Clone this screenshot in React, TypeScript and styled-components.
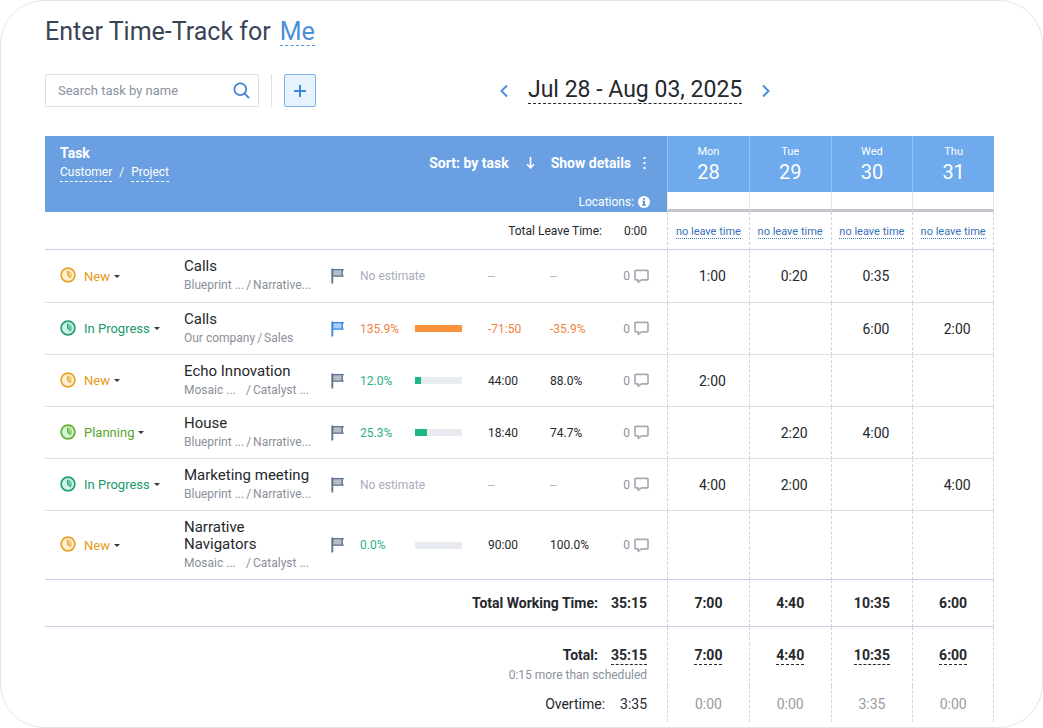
import React from "react";
import styled, { createGlobalStyle } from "styled-components";

const GlobalStyle = createGlobalStyle`
  *, *::before, *::after { box-sizing: border-box; }
  body {
    margin: 0;
    background: #fff;
    color: #25282c;
    font-family: Roboto, "Liberation Sans", sans-serif;
    font-size: 14px;
  }
  button, input { font: inherit; }
`;

const Card = styled.main`
  min-height: 100vh;
  padding: 17px 48px 4px 44px;
  border: 1px solid #e4e5e7;
  border-radius: 44px;
`;

const PlainButton = styled.button`
  padding: 0;
  border: 0;
  background: none;
  color: inherit;
  cursor: pointer;
`;

const Title = styled.h1`
  display: flex;
  gap: 9px;
  margin: 0;
  color: #3b4457;
  font-size: 25px;
  font-weight: 400;
  line-height: 27px;
`;

const UserLink = styled.a`
  border-bottom: 1px dashed #4a8fd9;
  color: #4a8fd9;
  text-decoration: none;
`;

const Toolbar = styled.div`
  display: flex;
  align-items: center;
  height: 33px;
  margin: 28px 0 29px;
`;

const SearchBox = styled.label`
  display: flex;
  align-items: center;
  width: 214px;
  height: 33px;
  padding: 0 8px 0 12px;
  border: 1px solid #dcdee4;
  border-radius: 2px;
  color: #4583cb;
`;

const SearchInput = styled.input`
  flex: 1;
  min-width: 0;
  padding: 0;
  border: 0;
  outline: 0;
  background: none;
  font-size: 13px;
  &::placeholder { color: #8b909f; opacity: 1; }
`;

const Divider = styled.span`
  width: 1px;
  height: 33px;
  margin: 0 12px;
  background: #dfe1e6;
`;

const AddButton = styled(PlainButton)`
  display: grid;
  place-items: center;
  width: 32px;
  height: 33px;
  border: 1px solid #7fb0ea;
  border-radius: 2px;
  background: #e6f2fe;
  color: #3f86d6;
`;

const WeekNav = styled.nav`
  display: flex;
  align-items: center;
  gap: 18px;
  margin-left: 182px;
  color: #4a90e2;
  svg { display: block; }
`;

const WeekRange = styled(PlainButton)`
  border-bottom: 1px dashed #25282c;
  color: #25282c;
  font-size: 23px;
  line-height: 26px;
`;

const Sheet = styled.table`
  width: 100%;
  table-layout: fixed;
  border-collapse: separate;
  border-spacing: 0;
  th, td { padding: 0; text-align: left; }
`;

const TaskHead = styled.th`
  height: 76px;
  background: #6a9fe1;
  color: #fff;
  font-weight: 400;
  vertical-align: top;
`;

const HeadBar = styled.div`
  display: flex;
  justify-content: space-between;
  height: 76px;
  padding: 8px 17px 2px 15px;
`;

const HeadLabel = styled.div`
  font-size: 14px;
  font-weight: 700;
  line-height: 18px;
`;

const HeadLinks = styled.div`
  display: flex;
  gap: 7px;
  margin-top: 2px;
  font-size: 12px;
  line-height: 17px;
  a {
    border-bottom: 1px dashed #fff;
    color: inherit;
    text-decoration: none;
  }
`;

const HeadActions = styled.div`
  display: flex;
  flex-direction: column;
  justify-content: space-between;
  align-items: flex-end;
`;

const SortRow = styled.div`
  display: flex;
  align-items: center;
  height: 38px;
  padding-right: 2px;
  button { font-weight: 700; }
  svg { display: block; }
`;

const SortButton = styled(PlainButton)`
  display: flex;
  align-items: center;
  gap: 17px;
  margin-right: 16px;
`;

const DetailsButton = styled(PlainButton)`
  display: flex;
  align-items: center;
  gap: 10px;
`;

const Locations = styled.div`
  display: flex;
  align-items: center;
  gap: 4px;
  font-size: 12px;
  line-height: 16px;
`;

const DayHead = styled.th`
  height: 56px;
  border-left: 1px solid #8fc0f5;
  background: #6eaaec;
  color: #fff;
  font-weight: 400;
  && { padding-top: 2px; text-align: center; }
`;

const DayName = styled.div`
  font-size: 11px;
  line-height: 14px;
`;

const DayNumber = styled.div`
  font-size: 20px;
  line-height: 26px;
`;

const LocationCell = styled.td`
  height: 20px;
  border-left: 1px solid #e6e7ea;
  border-bottom: 3px solid #c3c6cd;
  &:last-child { border-right: 1px solid #e6e7ea; }
`;

type Line = "strong" | "soft" | "none";
const lineColor = { strong: "#cccce4", soft: "#dfe0e7", none: "transparent" };

const Row = styled.tr<{ $height: number; $line: Line }>`
  height: ${(p) => p.$height}px;
  > * {
    border-bottom: ${(p) => (p.$line === "none" ? "0" : `1px solid ${lineColor[p.$line]}`)};
  }
`;

const DayCell = styled.td<{ $tone?: "bold" | "muted" }>`
  border-left: 1px dashed #d3d3de;
  color: ${(p) => (p.$tone === "muted" ? "#999ba1" : "#25282c")};
  font-weight: ${(p) => (p.$tone === "bold" ? 700 : 400)};
  && { text-align: center; }
  &:last-child { border-right: 1px dashed #d3d3de; }
`;

const HoursCell = styled(DayCell)`
  && { padding-left: 8px; }
`;

const LeaveLink = styled.a`
  border-bottom: 1px dotted #3d7cc0;
  color: #3672b8;
  font-size: 11px;
  line-height: 14px;
  text-decoration: none;
`;

const StatusButton = styled(PlainButton)<{ $color: string }>`
  display: flex;
  align-items: center;
  gap: 8px;
  padding-left: 15px;
  color: ${(p) => p.$color};
  font-size: 13px;
  svg { margin-bottom: 2px; }
`;

const Caret = styled.span`
  margin-left: -4px;
  border: 3px solid transparent;
  border-top-color: #33373c;
  border-bottom: 0;
`;

const TaskName = styled.div`
  font-size: 15px;
  line-height: 17px;
`;

const TaskPath = styled.div`
  display: flex;
  gap: 2px;
  margin-top: 2px;
  color: #8b8f9b;
  font-size: 12px;
  line-height: 17px;
  white-space: nowrap;
`;

const tones = { green: "#2bb07f", orange: "#f0833f", muted: "#a9adb9", dark: "#25282c" };
type Tone = keyof typeof tones;

const Metric = styled.td<{ $tone: Tone }>`
  color: ${(p) => tones[p.$tone]};
  font-size: 12px;
  white-space: nowrap;
`;

const Track = styled.div`
  width: 47px;
  height: 7px;
  background: #e8ebef;
`;

const Fill = styled.div<{ $over?: boolean }>`
  height: 7px;
  background: ${(p) => (p.$over ? "#fb923c" : "#1fb685")};
`;

const CommentButton = styled(PlainButton)`
  display: flex;
  align-items: center;
  gap: 4px;
  margin-left: auto;
  margin-right: 18px;
  color: #8f9299;
  font-size: 12px;
`;

const SumCell = styled.th`
  font-weight: 400;
`;

const SumLine = styled.div<{ $gap: number; $bold?: boolean; $small?: boolean }>`
  display: flex;
  justify-content: flex-end;
  gap: ${(p) => p.$gap}px;
  padding-right: 20px;
  font-size: ${(p) => (p.$small ? 12 : 14)}px;
  font-weight: ${(p) => (p.$bold ? 700 : 400)};
  line-height: 18px;
`;

const SumNote = styled.div`
  margin-top: 2px;
  padding-right: 20px;
  color: #8b90a0;
  font-size: 12px;
  line-height: 16px;
  text-align: right;
`;

const Dashed = styled.span`
  display: inline-block;
  border-bottom: 1px dashed #25282c;
  line-height: 18px;
`;

const TotalDay = styled(DayCell)`
  && { padding-top: 19px; }
  vertical-align: top;
`;

const TotalSum = styled(SumCell)`
  && { padding-top: 19px; }
  vertical-align: top;
`;

const palette = {
  New: { text: "#e79b16", ring: "#e8a32c", fill: "#fdf0d2" },
  "In Progress": { text: "#179a6b", ring: "#239f74", fill: "#cdf3e2" },
  Planning: { text: "#58a51f", ring: "#64ac35", fill: "#d3f5cf" },
};
type Status = keyof typeof palette;

const ClockIcon = ({ status }: { status: Status }) => {
  const { ring, fill } = palette[status];
  return (
    <svg width="16" height="16" viewBox="0 0 16 16" aria-hidden="true">
      <circle cx="8" cy="8" r="6.9" fill={fill} stroke={ring} strokeWidth="1.7" />
      <path d="M7.6 3.6a4.4 4.4 0 0 1 3.300 7.500L7.600 8z" fill={ring} fillOpacity="0.5" />
      <path d="M7.600 3.800V8l3 2.800" fill="none" stroke={ring} strokeWidth="1.1" />
    </svg>
  );
};

const FlagIcon = ({ active }: { active?: boolean }) => {
  const stroke = active ? "#3483e0" : "#5c708a";
  return (
    <Flag width="13" height="16" viewBox="0 0 13 16" aria-hidden="true">
      <path d="M1.500 1.700h10.400l-1 3.200 1 3.300H1.500z" fill={active ? "#a9d0fb" : "#b4bfcc"} stroke={stroke} strokeWidth="1.300" />
      <path d="M1.300 .5v15" stroke={stroke} strokeWidth="1.800" />
    </Flag>
  );
};

const Flag = styled.svg`
  display: block;
`;

const CommentIcon = () => (
  <svg width="15" height="15" viewBox="0 0 15 15" fill="none" stroke="#a9abb0" strokeWidth="1.7" strokeLinejoin="round" aria-hidden="true">
    <path d="M2 1.300h11a1 1 0 0 1 1 1v7.600a1 1 0 0 1-1 1H7.400L4.200 13.300v-2.400H2a1 1 0 0 1-1-1V2.300a1 1 0 0 1 1-1z" />
  </svg>
);

interface Task {
  status: Status;
  name: string;
  customer: string;
  project: string;
  wideGap?: boolean;
  flagged?: boolean;
  used?: string;
  percent?: number;
  left?: string;
  leftPercent?: string;
  tone?: Tone;
  hours: string[];
  height: number;
}

const tasks: Task[] = [
  { status: "New", name: "Calls", customer: "Blueprint ...", project: "Narrative...", hours: ["1:00", "0:20", "0:35", ""], height: 53 },
  { status: "In Progress", name: "Calls", customer: "Our company", project: "Sales", flagged: true, used: "135.9%", percent: 100, left: "-71:50", leftPercent: "-35.9%", tone: "orange", hours: ["", "", "6:00", "2:00"], height: 52 },
  { status: "New", name: "Echo Innovation", customer: "Mosaic ...", project: "Catalyst ...", wideGap: true, used: "12.0%", percent: 12, left: "44:00", leftPercent: "88.0%", tone: "green", hours: ["2:00", "", "", ""], height: 52 },
  { status: "Planning", name: "House", customer: "Blueprint ...", project: "Narrative...", used: "25.3%", percent: 25.3, left: "18:40", leftPercent: "74.7%", tone: "green", hours: ["", "2:20", "4:00", ""], height: 52 },
  { status: "In Progress", name: "Marketing meeting", customer: "Blueprint ...", project: "Narrative...", hours: ["4:00", "2:00", "", "4:00"], height: 52 },
  { status: "New", name: "Narrative Navigators", customer: "Mosaic ...", project: "Catalyst ...", wideGap: true, used: "0.0%", percent: 0, left: "90:00", leftPercent: "100.0%", tone: "green", hours: ["", "", "", ""], height: 69 },
];

const days = [
  { name: "Mon", number: 28, total: "7:00", overtime: "0:00" },
  { name: "Tue", number: 29, total: "4:40", overtime: "0:00" },
  { name: "Wed", number: 30, total: "10:35", overtime: "3:35" },
  { name: "Thu", number: 31, total: "6:00", overtime: "0:00" },
];

const NameCell = styled.td`
  && { padding-right: 18px; }
`;

const Customer = styled.span<{ $wide?: boolean }>`
  flex: none;
  width: ${(p) => (p.$wide ? "60px" : "auto")};
`;

const columnWidths = [139, 147, 29, 55, 73, 62, 61, 56];

const TaskRow = ({ task, last }: { task: Task; last: boolean }) => {
  const side: Tone = !task.used ? "muted" : task.tone === "orange" ? "orange" : "dark";
  return (
    <Row $height={task.height} $line={last ? "strong" : "soft"}>
      <td>
        <StatusButton $color={palette[task.status].text}>
          <ClockIcon status={task.status} />
          {task.status}
          <Caret />
        </StatusButton>
      </td>
      <NameCell>
        <TaskName>{task.name}</TaskName>
        <TaskPath>
          <Customer $wide={task.wideGap}>{task.customer}</Customer>
          <span>/</span>
          <span>{task.project}</span>
        </TaskPath>
      </NameCell>
      <td>
        <FlagIcon active={task.flagged} />
      </td>
      {task.used ? (
        <>
          <Metric $tone={task.tone ?? "green"}>{task.used}</Metric>
          <td>
            <Track>
              <Fill $over={task.tone === "orange"} style={{ width: `${task.percent}%` }} />
            </Track>
          </td>
        </>
      ) : (
        <Metric $tone="muted" colSpan={2}>No estimate</Metric>
      )}
      <Metric $tone={side}>{task.left ?? "--"}</Metric>
      <Metric $tone={side}>{task.leftPercent ?? "--"}</Metric>
      <td>
        <CommentButton aria-label="Comments">
          0
          <CommentIcon />
        </CommentButton>
      </td>
      {task.hours.map((h, i) => (
        <HoursCell key={i}>{h}</HoursCell>
      ))}
    </Row>
  );
};

export default function App() {
  return (
    <>
      <GlobalStyle />
      <Card>
        <Title>
          Enter Time-Track for
          <UserLink href="#user">Me</UserLink>
        </Title>

        <Toolbar>
          <SearchBox>
            <SearchInput type="text" aria-label="Search task by name" placeholder="Search task by name" />
            <svg width="17" height="17" viewBox="0 0 17 17" fill="none" stroke="currentColor" strokeWidth="1.8" aria-hidden="true">
              <circle cx="7.3" cy="7.3" r="5.9" />
              <path d="M11.6 11.6l4.400 4.400" />
            </svg>
          </SearchBox>
          <Divider />
          <AddButton aria-label="Add task">
            <svg width="14" height="14" viewBox="0 0 14 14" stroke="currentColor" strokeWidth="2" aria-hidden="true">
              <path d="M7 1v12M1 7h12" />
            </svg>
          </AddButton>
          <WeekNav aria-label="Week">
            <PlainButton aria-label="Previous week">
              <svg width="12" height="14" viewBox="0 0 12 14" fill="none" stroke="currentColor" strokeWidth="2" aria-hidden="true">
                <path d="M9 1.500L3.500 7 9 12.500" />
              </svg>
            </PlainButton>
            <WeekRange>Jul 28 - Aug 03, 2025</WeekRange>
            <PlainButton aria-label="Next week">
              <svg width="12" height="14" viewBox="0 0 12 14" fill="none" stroke="currentColor" strokeWidth="2" aria-hidden="true">
                <path d="M3 1.500L8.500 7 3 12.500" />
              </svg>
            </PlainButton>
          </WeekNav>
        </Toolbar>

        <Sheet>
          <colgroup>
            {columnWidths.map((w, i) => (
              <col key={i} width={w} />
            ))}
            {days.map((d) => (
              <col key={d.name} />
            ))}
          </colgroup>
          <thead>
            <tr>
              <TaskHead colSpan={8} rowSpan={2}>
                <HeadBar>
                  <div>
                    <HeadLabel>Task</HeadLabel>
                    <HeadLinks>
                      <a href="#customer">Customer</a>
                      <span>/</span>
                      <a href="#project">Project</a>
                    </HeadLinks>
                  </div>
                  <HeadActions>
                    <SortRow>
                      <SortButton>
                        Sort: by task
                        <svg width="9" height="12" viewBox="0 0 9 12" fill="none" stroke="#fff" strokeWidth="1.6" aria-hidden="true">
                          <path d="M4.500 0v10.500M1 7.300l3.500 3.500L8 7.300" />
                        </svg>
                      </SortButton>
                      <DetailsButton>
                        Show details
                        <svg width="7" height="12" viewBox="0 0 7 12" fill="#fff" aria-hidden="true">
                          <path d="M2.500 0h2v2h-2zM2.500 5h2v2h-2zM2.500 10h2v2h-2z" />
                        </svg>
                      </DetailsButton>
                    </SortRow>
                    <Locations>
                      Locations:
                      <svg width="12" height="12" viewBox="0 0 12 12" aria-hidden="true">
                        <circle cx="6" cy="6" r="6" fill="#fff" />
                        <path d="M5 2h2v1.700H5zM4.300 4.700H7v3.800h.8V9.700H4.200V8.500H5V5.900h-.7z" fill="#5b90d4" />
                      </svg>
                    </Locations>
                  </HeadActions>
                </HeadBar>
              </TaskHead>
              {days.map((d) => (
                <DayHead key={d.name}>
                  <DayName>{d.name}</DayName>
                  <DayNumber>{d.number}</DayNumber>
                </DayHead>
              ))}
            </tr>
            <tr>
              {days.map((d) => (
                <LocationCell key={d.name} />
              ))}
            </tr>
          </thead>
          <tbody>
            <Row $height={38} $line="strong">
              <SumCell colSpan={8}>
                <SumLine $gap={22} $small>
                  <span>Total Leave Time:</span>
                  <span>0:00</span>
                </SumLine>
              </SumCell>
              {days.map((d) => (
                <DayCell key={d.name}>
                  <LeaveLink href="#leave">no leave time</LeaveLink>
                </DayCell>
              ))}
            </Row>
            {tasks.map((t, i) => (
              <TaskRow key={i} task={t} last={i === tasks.length - 1} />
            ))}
          </tbody>
          <tfoot>
            <Row $height={47} $line="strong">
              <SumCell colSpan={8}>
                <SumLine $gap={13} $bold>
                  <span>Total Working Time:</span>
                  <span>35:15</span>
                </SumLine>
              </SumCell>
              {days.map((d) => (
                <DayCell key={d.name} $tone="bold">{d.total}</DayCell>
              ))}
            </Row>
            <Row $height={59} $line="none">
              <TotalSum colSpan={8}>
                <SumLine $gap={13} $bold>
                  <span>Total:</span>
                  <Dashed>35:15</Dashed>
                </SumLine>
                <SumNote>0:15 more than scheduled</SumNote>
              </TotalSum>
              {days.map((d) => (
                <TotalDay key={d.name} $tone="bold">
                  <Dashed>{d.total}</Dashed>
                </TotalDay>
              ))}
            </Row>
            <Row $height={36} $line="none">
              <SumCell colSpan={8}>
                <SumLine $gap={15}>
                  <span>Overtime:</span>
                  <span>3:35</span>
                </SumLine>
              </SumCell>
              {days.map((d) => (
                <DayCell key={d.name} $tone="muted">{d.overtime}</DayCell>
              ))}
            </Row>
          </tfoot>
        </Sheet>
      </Card>
    </>
  );
}
